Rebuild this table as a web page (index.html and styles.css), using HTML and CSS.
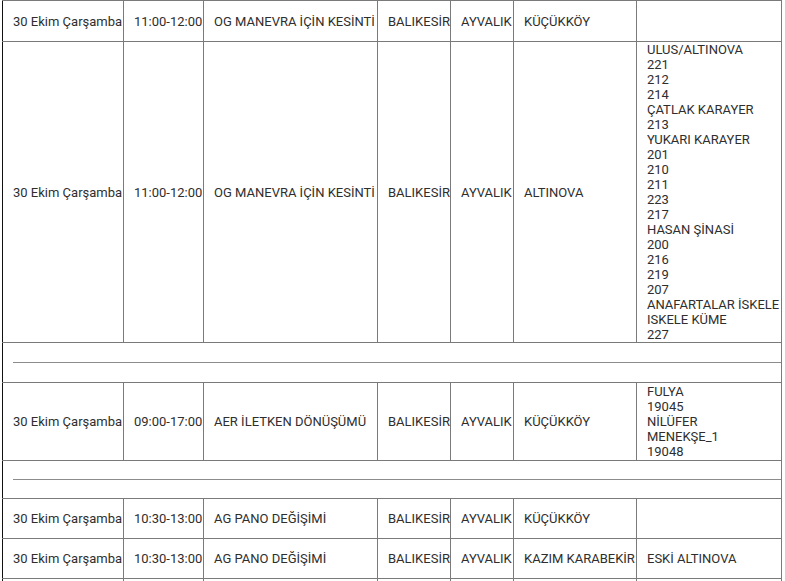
FILE: index.html
```html
<!DOCTYPE html>
<html lang="tr">
<head>
<meta charset="utf-8">
<title>Kesinti Listesi</title>
<link rel="stylesheet" href="styles.css">
</head>
<body>
<table class="grid">
  <colgroup>
    <col class="c-date"><col class="c-time"><col class="c-reason"><col class="c-city"><col class="c-town"><col class="c-hood"><col class="c-streets">
  </colgroup>
  <tbody>
    <tr class="row first">
      <td>30 Ekim Çarşamba</td><td>11:00-12:00</td><td>OG MANEVRA İÇİN KESİNTİ</td><td>BALIKESİR</td><td>AYVALIK</td><td>KÜÇÜKKÖY</td><td></td>
    </tr>
    <tr class="row">
      <td>30 Ekim Çarşamba</td><td>11:00-12:00</td><td>OG MANEVRA İÇİN KESİNTİ</td><td>BALIKESİR</td><td>AYVALIK</td><td>ALTINOVA</td>
      <td class="list">ULUS/ALTINOVA<br>221<br>212<br>214<br>ÇATLAK KARAYER<br>213<br>YUKARI KARAYER<br>201<br>210<br>211<br>223<br>217<br>HASAN ŞİNASİ<br>200<br>216<br>219<br>207<br>ANAFARTALAR İSKELE<br>ISKELE KÜME<br>227</td>
    </tr>
    <tr class="spacer"><td colspan="7"><hr class="rule"></td></tr>
    <tr class="row">
      <td>30 Ekim Çarşamba</td><td>09:00-17:00</td><td>AER İLETKEN DÖNÜŞÜMÜ</td><td>BALIKESİR</td><td>AYVALIK</td><td>KÜÇÜKKÖY</td>
      <td class="list padded">FULYA<br>19045<br>NİLÜFER<br>MENEKŞE_1<br>19048</td>
    </tr>
    <tr class="spacer short"><td colspan="7"><hr class="rule"></td></tr>
    <tr class="row">
      <td>30 Ekim Çarşamba</td><td>10:30-13:00</td><td>AG PANO DEĞİŞİMİ</td><td>BALIKESİR</td><td>AYVALIK</td><td>KÜÇÜKKÖY</td><td></td>
    </tr>
    <tr class="row">
      <td>30 Ekim Çarşamba</td><td>10:30-13:00</td><td>AG PANO DEĞİŞİMİ</td><td>BALIKESİR</td><td>AYVALIK</td><td>KAZIM KARABEKİR</td><td>ESKİ ALTINOVA</td>
    </tr>
    <tr class="row">
      <td></td><td></td><td></td><td></td><td></td><td></td><td></td>
    </tr>
  </tbody>
</table>
</body>
</html>
```
FILE: styles.css
```css
html, body {
  margin: 0;
  padding: 0;
  background: #fff;
}
body {
  font-family: Roboto, "Liberation Sans", Arial, sans-serif;
  font-size: 13px;
  line-height: 15px;
  color: #2e2e2e;
}
.grid {
  border-collapse: collapse;
  table-layout: fixed;
  width: 779px;
  margin-left: 2px;
}
.c-date { width: 121px; }
.c-time { width: 80px; }
.c-reason { width: 174px; }
.c-city { width: 73px; }
.c-town { width: 63px; }
.c-hood { width: 123px; }
.c-streets { width: 145px; }
.grid td {
  border: 1px solid #7a7a7a;
  padding: 0 0 0 10px;
  vertical-align: middle;
  white-space: nowrap;
  overflow: visible;
}
.grid td:first-child {
  border-left: 1px solid #111;
}
.row td {
  height: 39px;
}
.row.first td {
  height: 40px;
}
.grid td.list.padded {
  padding-top: 1px;
  padding-bottom: 1px;
}
.spacer td {
  height: 39px;
  padding: 0 0 0 10px;
}
.spacer.short td {
  height: 37px;
}
.rule {
  margin: 0;
  border: 0;
  border-top: 1px solid #8c8c8c;
  height: 0;
}
```
